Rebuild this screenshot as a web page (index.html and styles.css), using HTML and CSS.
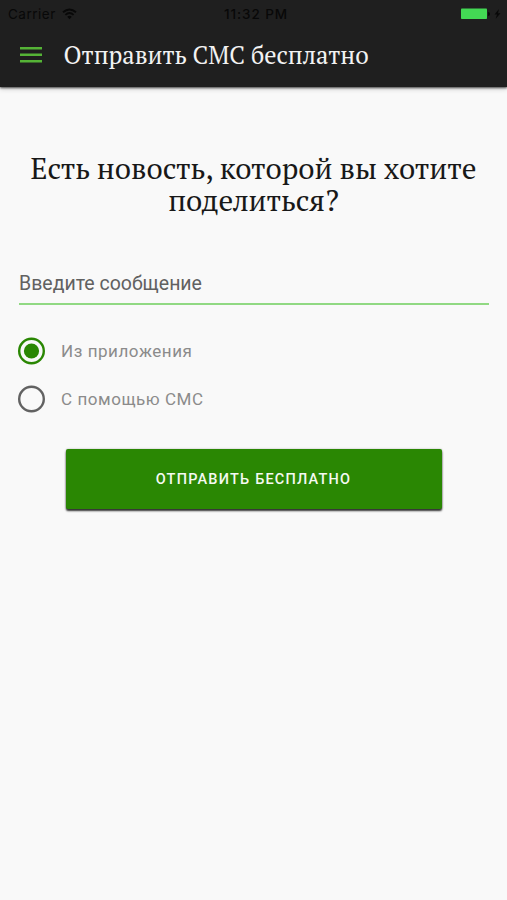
FILE: index.html
```html
<!DOCTYPE html>
<html lang="ru">
<head>
<meta charset="utf-8">
<title>Отправить СМС бесплатно</title>
<link rel="stylesheet" href="styles.css">
</head>
<body>
<header class="app-bar">
  <div class="status">
    <div class="carrier"><span>Carrier</span>
      <svg width="15" height="12" viewBox="0 0 15 12" fill="none" stroke="#080808" stroke-width="1.9"><path d="M1 4.3Q7.5-1.3 14 4.3M3.4 6.9Q7.5 3.3 11.6 6.9"/><path d="M5.2 8.7Q7.5 6.9 9.8 8.7L7.5 11.2Z" fill="#080808" stroke="none"/></svg>
    </div>
    <span class="time">11:32 PM</span>
    <svg class="battery" width="41" height="12" viewBox="0 0 41 12"><rect width="26" height="10.5" y=".5" rx=".8" fill="#43d854"/><path d="M27 4q2 .2 2 2t-2 2z" fill="#080808"/><path d="M38 1 33.5 6.5H36L34.7 10.7 39.5 5.2H37Z" fill="#080808"/></svg>
  </div>
  <div class="toolbar">
    <svg class="menu" width="22" height="16" viewBox="0 0 22 16" fill="#55b336"><path d="M0 0h22v2.4H0zM0 6.5h22v2.4H0zM0 13h22v2.4H0z"/></svg>
    <h1>Отправить СМС бесплатно</h1>
  </div>
</header>
<main>
  <h2><span>Есть новость, которой вы хотите</span> <span>поделиться?</span></h2>
  <div class="field">Введите сообщение</div>
  <div class="option">
    <svg width="28" height="28" viewBox="0 0 28 28"><circle cx="14.5" cy="14" r="12.3" fill="none" stroke="#2a8703" stroke-width="2.4"/><circle cx="14.5" cy="14" r="7.6" fill="#2a8703"/></svg>
    <span>Из приложения</span>
  </div>
  <div class="option">
    <svg width="28" height="28" viewBox="0 0 28 28"><circle cx="14.5" cy="14" r="12.3" fill="none" stroke="#626262" stroke-width="2.4"/></svg>
    <span>С помощью СМС</span>
  </div>
  <button class="send">ОТПРАВИТЬ БЕСПЛАТНО</button>
</main>
</body>
</html>
```
FILE: styles.css
```css
* { box-sizing: border-box; }
body { margin: 0; min-height: 900px; background: #f9f9f9; font-family: Roboto, "Liberation Sans", sans-serif; }
svg { display: block; flex: none; }
.app-bar { height: 87px; background: #1f1f1f; box-shadow: 0 1px 2px rgba(0,0,0,.65), 0 2px 5px rgba(0,0,0,.18); }
.status { height: 27px; display: grid; grid-template-columns: 1fr auto 1fr; align-items: center; padding: 0 5px 0 8px; color: #080808; font-family: Inter, "Liberation Sans", sans-serif; font-size: 13.5px; }
.carrier { display: flex; align-items: center; gap: 6px; letter-spacing: .5px; }
.time { padding-left: 2px; font-weight: 500; letter-spacing: .9px; }
.battery { justify-self: end; }
.toolbar { height: 55px; display: flex; align-items: center; padding-left: 20px; gap: 21.5px; }
h1, h2 { margin: 0; font-family: "PT Serif", "Liberation Serif", serif; font-weight: 400; }
h1 { color: #f2f2f2; font-size: 24.4px; line-height: 32px; white-space: nowrap; }
main { padding: 65px 18px 0; }
h2 { display: flex; flex-direction: column; align-items: center; color: #181818; font-size: 29.35px; line-height: 32px; white-space: nowrap; }
.field { height: 43px; margin: 46px 0 0 1px; padding-top: 10px; border-bottom: 2px solid #91d983; color: #616161; font-size: 19.5px; line-height: 24px; }
.option { height: 48px; display: flex; align-items: center; gap: 16px; color: #8b8b8b; font-size: 17px; letter-spacing: .55px; }
.field + .option { margin-top: 22px; }
.option svg { margin-left: -1px; }
.send { display: flex; align-items: center; justify-content: center; width: 376px; height: 60px; margin: 26px auto 0; padding: 0; border: 0; border-radius: 2px; background: #2a8703; color: #f5faf2; box-shadow: 0 2px 2px rgba(0,0,0,.8), 0 0 2px rgba(0,0,0,.3); font: 500 14.5px Roboto, sans-serif; letter-spacing: 1.2px; }
```
